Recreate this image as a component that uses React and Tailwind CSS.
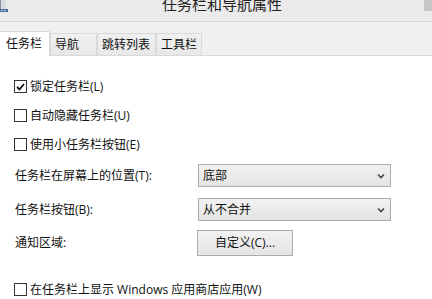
import React from "react";

const Checkbox = ({ checked, label }) => (
  <div className="flex items-center h-[13px]">
    <span className="w-[13px] h-[13px] border border-[#333] bg-white flex items-center justify-center shrink-0">
      {checked && (
        <svg width="9" height="8" viewBox="0 0 9 8">
          <path d="M1 4 L3.5 6.5 L8 1" fill="none" stroke="#111" strokeWidth="1.8" />
        </svg>
      )}
    </span>
    <span className="ml-[3px] leading-[13px]">{label}</span>
  </div>
);

const Select = ({ value }) => (
  <div className="ml-px w-[193px] h-[23px] border border-[#acacac] bg-gradient-to-b from-[#f2f2f2] to-[#e4e4e4] flex items-center justify-between pl-[4px] pr-[5px]">
    <span>{value}</span>
    <svg width="8" height="6" viewBox="0 0 8 6">
      <path d="M1 1.5 L4 4.5 L7 1.5" fill="none" stroke="#444" strokeWidth="1.6" />
    </svg>
  </div>
);

const tabs = [
  { name: "任务栏", w: "w-[50px]", active: true },
  { name: "导航", w: "w-[47px]" },
  { name: "跳转列表", w: "w-[59px]" },
  { name: "工具栏", w: "w-[46px]" },
];

const App = () => {
  return (
    <div className="w-[432px] h-[299px] overflow-hidden bg-[#f0f0f0] flex flex-col text-[12px] text-[#111] font-['Open_Sans','Noto_Sans_CJK_SC',sans-serif]">
      {/* title bar */}
      <div className="h-[22px] shrink-0 bg-[#ebebeb] border-b border-[#d6d6d6] flex items-start">
        <svg width="9" height="13" viewBox="0 0 9 13" className="shrink-0">
          <rect x="0" y="0" width="6" height="9" fill="#d8dde3" />
          <rect x="0" y="0" width="1" height="9" fill="#8a9099" />
          <rect x="0" y="9" width="8" height="3" fill="#4a6c9b" />
          <rect x="1" y="10" width="2" height="1" fill="#c9d6e6" />
          <rect x="4" y="10" width="2" height="1" fill="#c9d6e6" />
        </svg>
        <span className="ml-[153px] -mt-[6px] text-[15px] leading-[20px] text-[#222] font-['Noto_Sans_CJK_SC',sans-serif]">
          任务栏和导航属性
        </span>
        <div className="ml-auto w-[8px] h-[11px] bg-[#c6c6c6]" />
      </div>

      {/* tabs */}
      <div className="pt-[9px] flex items-end border-b border-[#d9d9d9] shrink-0">
        {tabs.map((t) =>
          t.active ? (
            <div
              key={t.name}
              className={`${t.w} h-[25px] -mb-px bg-white border-r border-t border-[#d9d9d9] pl-[6px] pt-[3px] leading-[18px]`}
            >
              {t.name}
            </div>
          ) : (
            <div
              key={t.name}
              className={`${t.w} h-[22px] bg-gradient-to-b from-[#f0f0f0] to-[#e8e8e8] border border-b-0 border-[#d9d9d9] pl-[4px] pt-[2px] leading-[18px]`}
            >
              {t.name}
            </div>
          )
        )}
      </div>

      {/* content */}
      <div className="flex-1 bg-white pl-[14px] pt-[24px] flex flex-col">
        <div className="flex flex-col gap-[16px]">
          <Checkbox checked label="锁定任务栏(L)" />
          <Checkbox label="自动隐藏任务栏(U)" />
          <Checkbox label="使用小任务栏按钮(E)" />
        </div>

        <div className="mt-[13px] flex items-center">
          <span className="w-[183px] pl-px">任务栏在屏幕上的位置(T):</span>
          <Select value="底部" />
        </div>
        <div className="mt-[11px] flex items-center">
          <span className="w-[183px] pl-px">任务栏按钮(B):</span>
          <Select value="从不合并" />
        </div>
        <div className="mt-[9px] flex items-center">
          <span className="w-[183px] pl-px">通知区域:</span>
          <button className="w-[96px] h-[26px] border border-[#acacac] bg-gradient-to-b from-[#f2f2f2] to-[#e4e4e4] text-center">
            自定义(C)...
          </button>
        </div>

        <div className="mt-[27px]">
          <Checkbox label="在任务栏上显示 Windows 应用商店应用(W)" />
        </div>
      </div>
    </div>
  );
};

export default App;
